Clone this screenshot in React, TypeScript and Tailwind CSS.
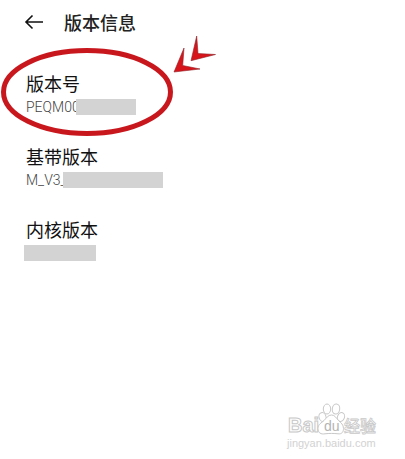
import React from 'react';

interface InfoItem {
  title: string;
  value: string;
  maskClass: string;
  circled?: boolean;
}

const items: InfoItem[] = [
  { title: '版本号', value: 'PEQM00', maskClass: 'w-[60px] -ml-1', circled: true },
  { title: '基带版本', value: 'M_V3_', maskClass: 'w-[100px] -ml-1' },
  { title: '内核版本', value: '', maskClass: 'w-[72px] -ml-0.5' },
];

const BackIcon = () => (
  <svg width="20" height="16" viewBox="0 0 20 16" fill="none" stroke="#111" strokeWidth="1.6">
    <path d="M19 8H2M8.5 1.5L2 8l6.5 6.5" />
  </svg>
);

// Hand-drawn style circle plus the double arrow head pointing at it
const Highlight = () => (
  <svg
    className="absolute -left-[26px] -top-[40px] pointer-events-none"
    width="220"
    height="110"
    viewBox="0 0 220 110"
    aria-hidden="true"
  >
    <ellipse cx="87" cy="63" rx="83.5" ry="41.5" fill="none" stroke="#c9171e" strokeWidth="5" />
    <path d="M184 19L174 43L200 40L182.700 36.500Z" fill="#d8141b" stroke="#8d2226" strokeWidth="0.6" />
    <path d="M196.700 7L191 31.700L215.500 25.500L198 24.500Z" fill="#d8141b" stroke="#8d2226" strokeWidth="0.6" />
  </svg>
);

const InfoRow: React.FC<{ item: InfoItem }> = ({ item }) => (
  <li className="relative">
    <h2 className="text-[18px] leading-7 text-[#111]">{item.title}</h2>
    <div className="flex items-center h-5">
      {item.value && (
        <span className="font-[Roboto,sans-serif] font-light text-[14px] leading-4 text-[#444]">{item.value}</span>
      )}
      <span className={`relative h-4 bg-[#d3d3d3] ${item.maskClass}`} />
    </div>
    {item.circled && <Highlight />}
  </li>
);

const Watermark = () => (
  <div className="absolute right-7 bottom-2 flex flex-col items-start">
    <svg
      width="90"
      height="36"
      viewBox="0 0 90 36"
      fill="#fff"
      stroke="#c8c8c8"
      strokeWidth="1"
      className="font-['Liberation_Sans','Noto_Sans_CJK_SC',sans-serif]"
    >
      <text x="1" y="33" fontSize="20" fontWeight="700">Bai</text>
      <ellipse cx="35.500" cy="18" rx="3.500" ry="4.500" transform="rotate(-15 35.500 18)" />
      <ellipse cx="40" cy="10" rx="3.700" ry="5" />
      <ellipse cx="49" cy="10" rx="3.700" ry="5" transform="rotate(8 49 10)" />
      <ellipse cx="54" cy="18" rx="3.500" ry="4.500" transform="rotate(20 54 18)" />
      <path d="M44.500 16c-3.500 0-5 3-7.500 5.500S31 25 31 29.500s3 6 7 5.300c4-.5 9-.5 13 0 4 .5 5.500-2 5.500-5.300 0-4-2.500-5.500-5-8S48 16 44.500 16z" />
      <text x="37" y="32" fontSize="14" stroke="none" fill="#b4b4b4">du</text>
      <text x="57" y="33" fontSize="16" fontWeight="500" strokeWidth="0.8">经验</text>
    </svg>
    <span className="font-['Liberation_Sans',sans-serif] text-[11px] leading-4 text-[#d2d2d2]">
      jingyan.baidu.com
    </span>
  </div>
);

const App: React.FC = () => {
  return (
    <div className="relative min-h-screen bg-white overflow-hidden font-['Noto_Sans_CJK_SC',sans-serif]">
      <header className="flex items-center h-[43px] px-6 gap-5">
        <button type="button" aria-label="返回">
          <BackIcon />
        </button>
        <h1 className="text-[18px] leading-7 font-medium text-[#222]">版本信息</h1>
      </header>
      <ul className="flex flex-col gap-[25px] pl-[26px] pr-6 pt-[26px]">
        {items.map((item) => (
          <InfoRow key={item.title} item={item} />
        ))}
      </ul>
      <Watermark />
    </div>
  );
};

export default App;
